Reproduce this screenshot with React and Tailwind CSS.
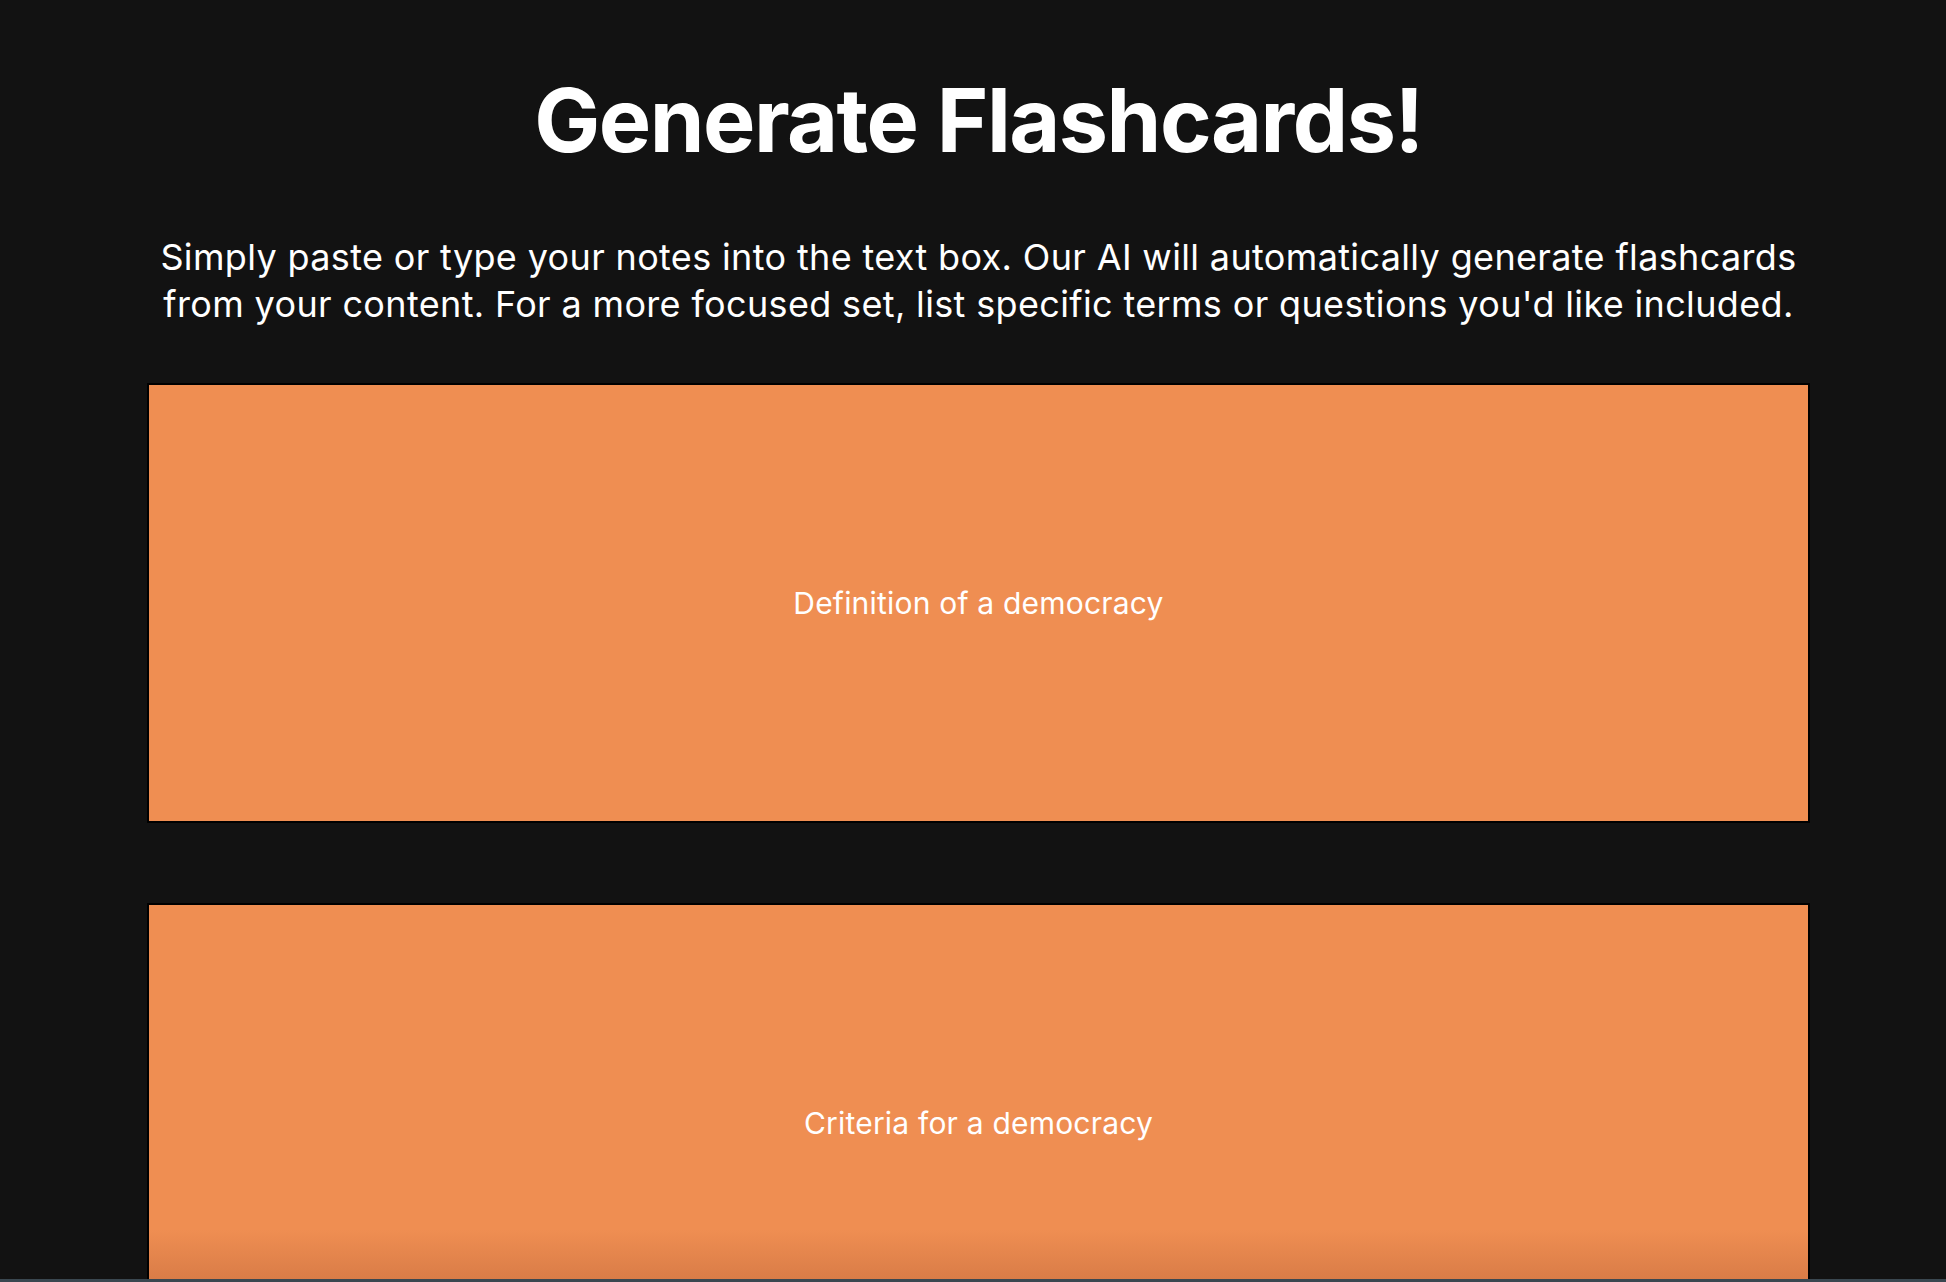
import React from "react";

function Card({ label, fade }) {
  return (
    <div className="relative h-[440px] w-[1663px] border-2 border-black bg-[#ef8e52] flex items-center justify-center">
      <span className="text-[30px] leading-none text-white font-normal tracking-[0.2px]">{label}</span>
      {fade && (
        <div className="absolute left-0 right-0 top-[325px] h-[50px] bg-gradient-to-b from-transparent to-[#d97c47]" />
      )}
    </div>
  );
}

export default function App() {
  return (
    <div
      className="relative h-[1282px] w-full overflow-hidden bg-[#121212] text-white"
      style={{ fontFamily: "Inter, 'Noto Sans', sans-serif" }}
    >
      <div className="ml-[147px] w-[1663px] flex flex-col items-center pt-[76px]">
        <h1 className="text-[88px] font-bold leading-[88px] tracking-[-1.5px] whitespace-nowrap">Generate Flashcards!</h1>
        <p className="mt-[70px] w-[1680px] shrink-0 text-center text-[36px] leading-[47px] tracking-[0.35px]">
          Simply paste or type your notes into the text box. Our AI will automatically generate flashcards
          from your content. For a more focused set, list specific terms or questions you'd like included.
        </p>
        <div className="mt-[55px] flex flex-col gap-[80px]">
          <Card label="Definition of a democracy" />
          <Card label="Criteria for a democracy" fade />
        </div>
      </div>
      <div className="absolute bottom-0 left-0 right-0 h-[3px] bg-[#3a4750]" />
    </div>
  );
}
